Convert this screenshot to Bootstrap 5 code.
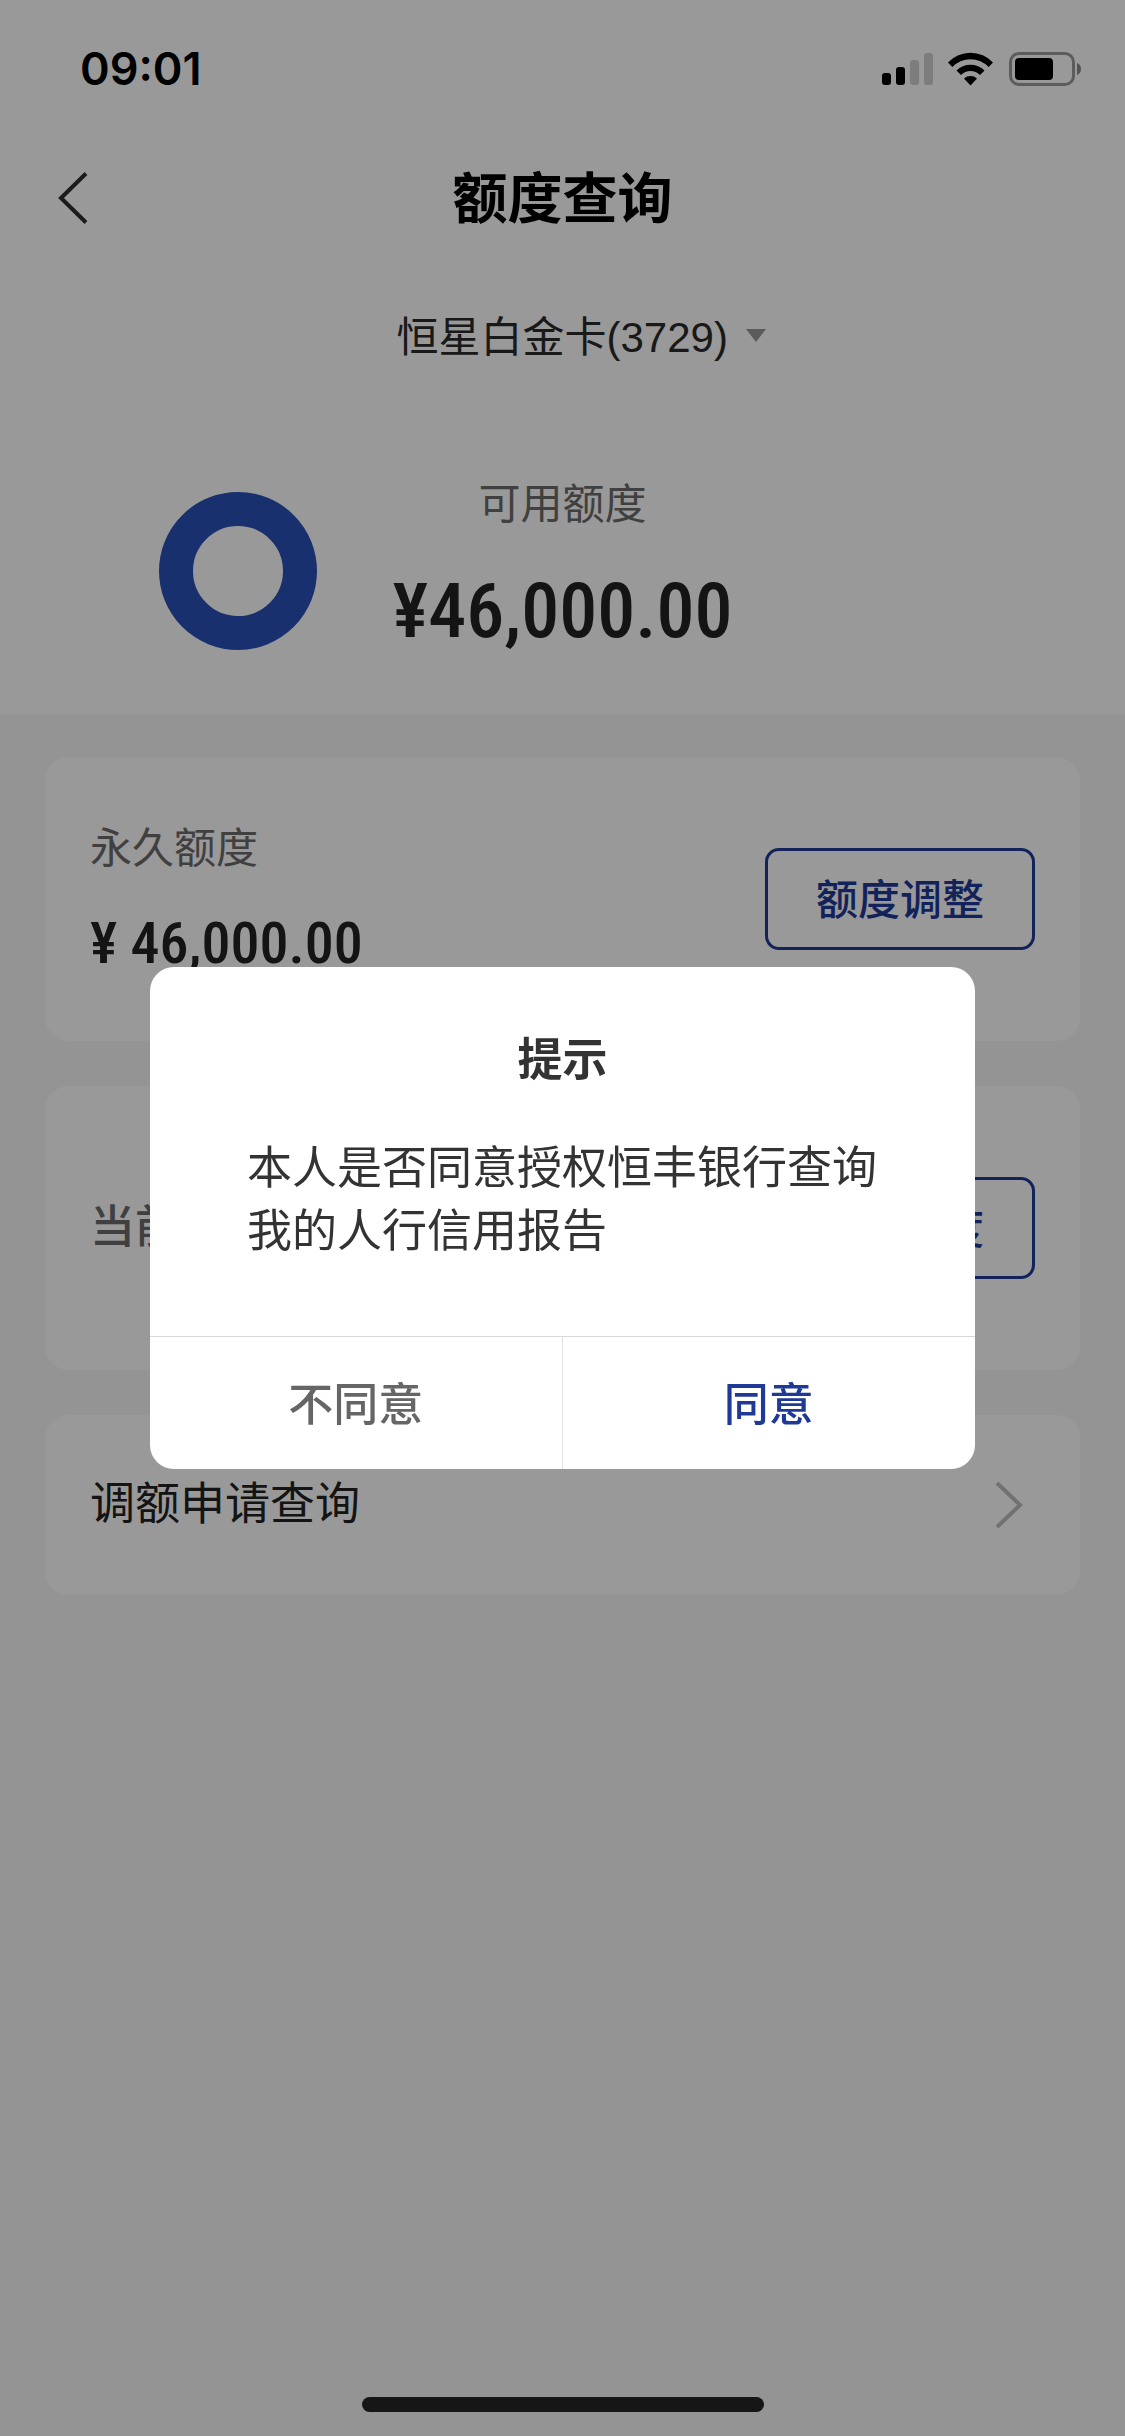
<!DOCTYPE html>
<html lang="zh-CN">
<head>
<meta charset="utf-8">
<meta name="viewport" content="width=device-width, initial-scale=1">
<title>额度查询</title>
<link href="https://cdn.jsdelivr.net/npm/bootstrap@5.3.0/dist/css/bootstrap.min.css" rel="stylesheet">
<style>
  :root { --brand: #1f3a96; --text: #333; --muted: #6b6b6b; }
  body { font-family: "Liberation Sans", "Noto Sans CJK SC", sans-serif; background: #f7f7f7; color: #222; font-size: 42px; line-height: 60px; }
  button { font-family: inherit; }
  .status-bar { height: 132px; padding: 6px 42px 0 80px; color: #000; }
  .clock { font-family: Inter, sans-serif; font-weight: 600; font-size: 45px; }
  .title-bar { height: 132px; padding: 0 57px; }
  .side-slot { width: 72px; }
  .page-title { font-size: 55px; line-height: 72px; font-weight: 700; color: #000; padding-top: 2px; }
  .card-picker { padding: 40px 0; }
  .picker-select { appearance: none; border: 0; background: transparent; font: inherit; color: #2b2b2b; padding: 4px 0 0; margin-left: 38px; }
  .quota-row { padding: 67px 158px 0; }
  .quota-row > * { flex: 1 1 0; }
  .quota-row > .quota-center { flex: 0 0 auto; }
  .quota-hero { padding-bottom: 64px; }
  .ring { width: 160px; height: 160px; }
  .label-muted { color: var(--muted); font-weight: 400; }
  .money { font-family: "Roboto Condensed", Roboto, sans-serif; font-weight: 500; color: #222; }
  .money-lg { font-size: 76px; line-height: 80px; margin-top: 36px; }
  .money-md { font-size: 58px; line-height: 72px; margin-top: 28px; }
  .panels { padding: 42px 45px; gap: 45px; }
  .panel { border: 0; border-radius: 24px; padding: 0 45px; background: #fff; --bs-card-color: inherit; }
  .panel-tall { min-height: 284px; }
  .panel-short { min-height: 180px; }
  .entry-text { font-size: 45px; }
  .btn-quota { width: 270px; height: 102px; border: 3px solid var(--brand); border-radius: 14px; color: var(--brand); font-size: 42px; font-weight: 500; line-height: 60px; padding: 4px 0 0; }
  .home-area { padding-bottom: 24px; }
  .home-bar { width: 402px; height: 15px; border-radius: 8px; background: #252525; }
  .modal-backdrop.show { opacity: .4; }
  .prompt-dialog { max-width: none; width: 825px; }
  .prompt-content { border: 0; border-radius: 24px; overflow: hidden; color: var(--text); font-size: 45px; line-height: 63px; }
  .prompt-title { font-size: 45px; line-height: 63px; font-weight: 600; padding-top: 62px; }
  .prompt-text { padding: 45px 97px 73px; }
  .prompt-actions { border-top: 1px solid #d8d8d8; }
  .btn-prompt { height: 132px; border: 0; border-radius: 0; font-size: 45px; line-height: 63px; font-weight: 500; padding-top: 10px; }
  .btn-refuse { color: #666; border-right: 1px solid #e2e2e2; }
  .btn-accept { color: var(--brand); }
</style>
<script src="https://cdn.jsdelivr.net/npm/bootstrap@5.3.0/dist/js/bootstrap.bundle.min.js"></script>
</head>
<body>
<div class="min-vh-100 d-flex flex-column">
  <div class="bg-white">
    <div class="status-bar d-flex align-items-center justify-content-between">
      <span class="clock">09:01</span>
      <svg width="202" height="36" viewBox="0 0 202 36" role="img" aria-label="信号、无线网络与电量">
        <rect x="1" y="22" width="9" height="12" rx="3"/>
        <rect x="15" y="16" width="9" height="18" rx="3"/>
        <rect x="29" y="9" width="9" height="25" rx="3" fill="#d0d0d0"/>
        <rect x="43" y="2" width="9" height="32" rx="3" fill="#d0d0d0"/>
        <path d="M67 11.5A31 31 0 0 1 112 11.5L107.700 16A25 25 0 0 0 71.300 16Z"/>
        <path d="M75.500 19.500A20 20 0 0 1 103.500 19.500L99 24A13.500 13.500 0 0 0 80 24Z"/>
        <path d="M83 27.500A10 10 0 0 1 96 27.500L89.500 34.500Z"/>
        <rect x="129.500" y="2.500" width="63" height="31" rx="8.500" fill="none" stroke="#9a9a9a" stroke-width="3"/>
        <rect x="134" y="7" width="38" height="22" rx="4"/>
        <path d="M196 12A6.500 6.500 0 0 1 196 24Z" fill="#8a8a8a"/>
      </svg>
    </div>
    <header class="title-bar d-flex align-items-center justify-content-between">
      <button type="button" class="side-slot btn p-0 border-0 text-start d-flex" aria-label="返回">
        <svg width="31" height="54" viewBox="0 0 31 54" fill="none" stroke="#2e2e2e" stroke-width="4"><path d="M29 2.500L4 27L29 51.500"/></svg>
      </button>
      <h1 class="page-title m-0">额度查询</h1>
      <span class="side-slot"></span>
    </header>
    <div class="card-picker d-flex justify-content-center align-items-center">
      <select class="picker-select" aria-label="选择卡片"><option>恒星白金卡(3729)</option></select>
      <svg class="ms-3" width="22" height="14" viewBox="0 0 22 14" fill="#989898" aria-hidden="true"><path d="M1 0H21L11 13Z"/></svg>
    </div>
    <section class="quota-hero">
      <div class="quota-row d-flex align-items-end">
        <div><svg class="ring d-block" viewBox="0 0 160 160" role="img" aria-label="额度占比"><circle cx="80" cy="80" r="62" fill="none" stroke="#2a50b9" stroke-width="34"/></svg></div>
        <div class="quota-center text-center">
          <div class="label-muted">可用额度</div>
          <div class="money money-lg">¥46,000.00</div>
        </div>
        <div></div>
      </div>
    </section>
  </div>

  <main class="panels d-flex flex-column">
    <section class="card panel panel-tall flex-row align-items-center justify-content-between">
      <div>
        <div class="label-muted">永久额度</div>
        <div class="money money-md">¥ 46,000.00</div>
      </div>
      <button type="button" class="btn btn-quota">额度调整</button>
    </section>
    <section class="card panel panel-tall flex-row align-items-center justify-content-between">
      <div class="label-muted entry-text fw-medium">当前额度</div>
      <button type="button" class="btn btn-quota">临时额度</button>
    </section>
    <a href="#" class="card panel panel-short flex-row align-items-center justify-content-between text-reset text-decoration-none">
      <span class="entry-text">调额申请查询</span>
      <svg class="me-2" width="34" height="50" viewBox="0 0 34 50" fill="none" stroke="#bdbdbd" stroke-width="4" aria-hidden="true"><path d="M4 3L27 25L4 47"/></svg>
    </a>
  </main>

  <div class="home-area mt-auto d-flex justify-content-center"><div class="home-bar"></div></div>
</div>

<div class="modal-backdrop show"></div>
<div class="modal show d-block" tabindex="-1" role="dialog" aria-modal="true" aria-labelledby="promptTitle">
  <div class="modal-dialog modal-dialog-centered prompt-dialog my-0 min-vh-100">
    <div class="modal-content prompt-content">
      <h2 id="promptTitle" class="prompt-title text-center m-0">提示</h2>
      <p class="prompt-text m-0">本人是否同意授权恒丰银行查询我的人行信用报告</p>
      <div class="prompt-actions d-flex">
        <button type="button" class="btn btn-prompt btn-refuse w-50">不同意</button>
        <button type="button" class="btn btn-prompt btn-accept w-50">同意</button>
      </div>
    </div>
  </div>
</div>
</body>
</html>
